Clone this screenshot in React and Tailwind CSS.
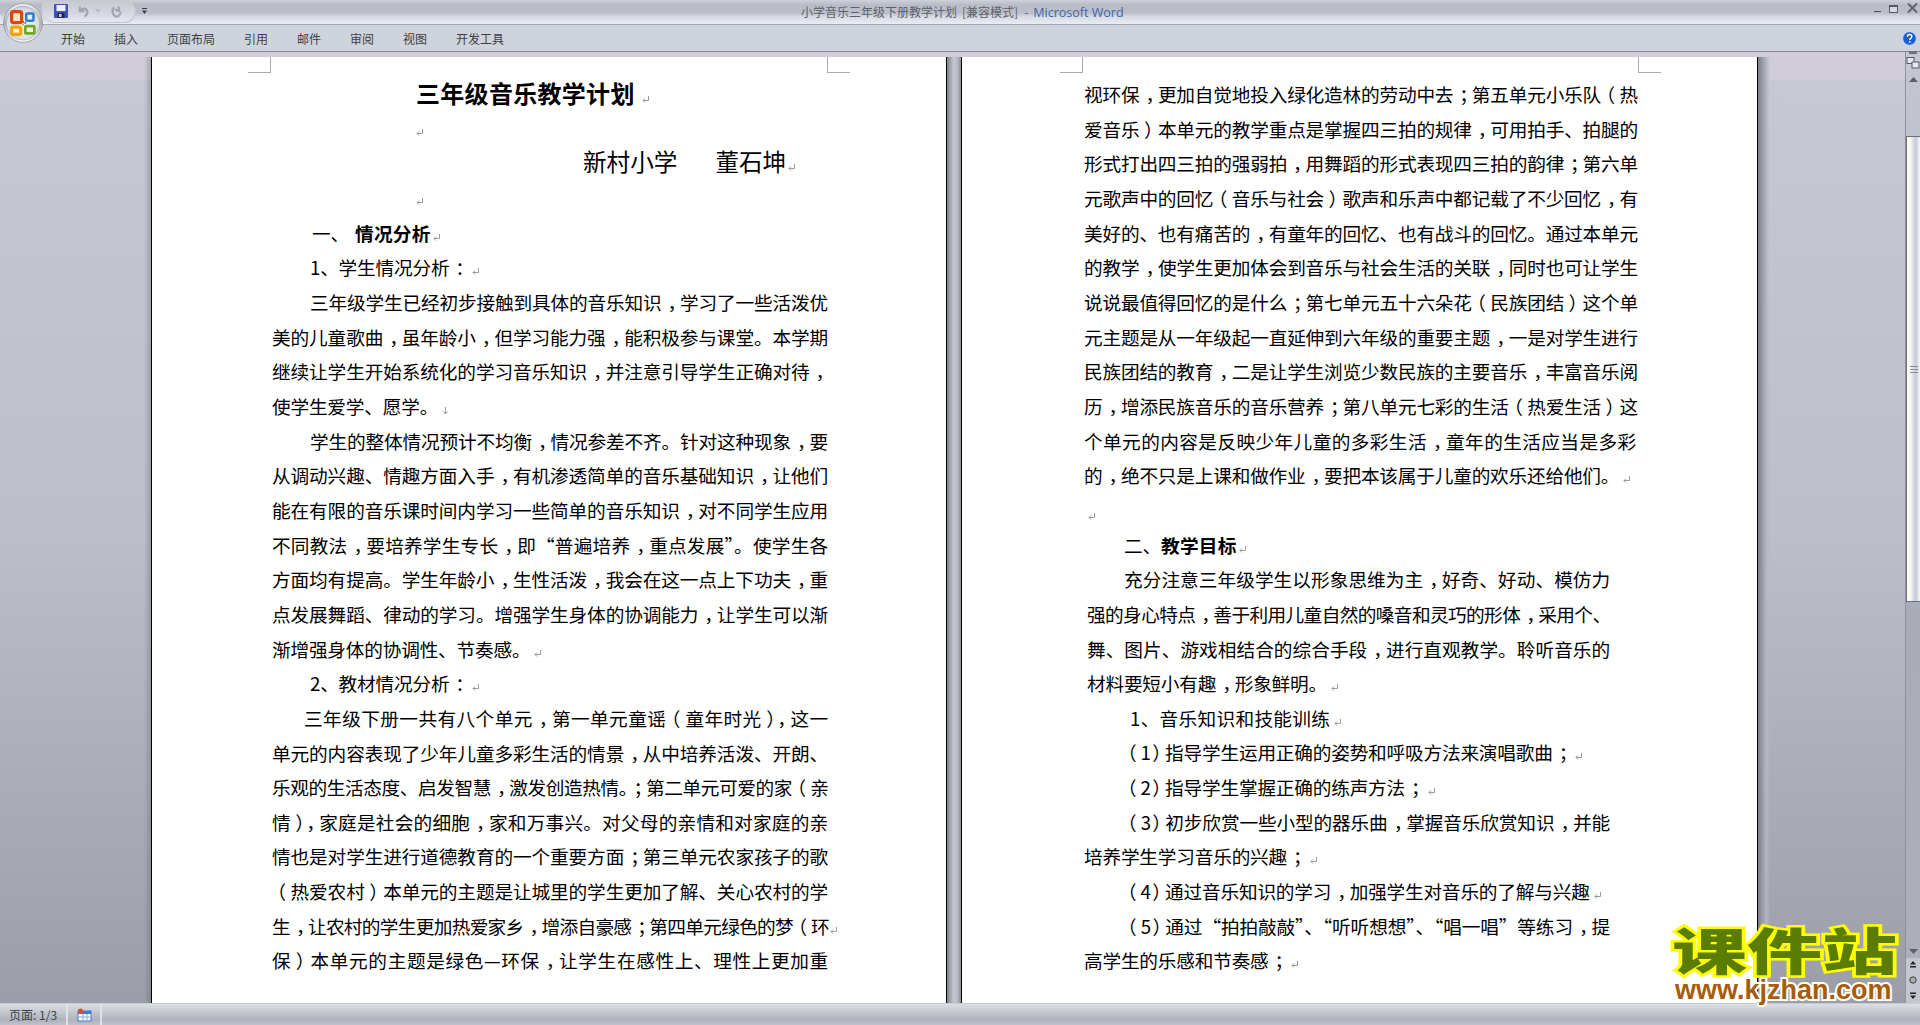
import React from "react";

const Mark = ({ cls = "ml-[3px]" }) => (
  <svg viewBox="0 0 9 9" className={`inline-block w-[9px] h-[9px] align-[-1px] ${cls}`}>
    <path d="M7.5 1v4.5H2M4 3.5 2 5.5 4 7.5" fill="none" stroke="#9a9a9a" strokeWidth="1" />
  </svg>
);
const DownMark = () => (
  <svg viewBox="0 0 9 9" className="inline-block w-[9px] h-[9px] align-[-1px] ml-[3px]">
    <path d="M4.5 1v7M2.5 5.5 4.5 8l2-2.5" fill="none" stroke="#9a9a9a" strokeWidth="1" />
  </svg>
);

const Txt = ({ t }) =>
  t.split(/(（\d）|[，；：（）])/).map((p, i) => {
    if (/^（\d）$/.test(p))
      return (
        <React.Fragment key={i}>
          （<span className="ml-[0.22em] -mr-[0.22em]">{p[1]}</span>
          <span className="ml-[0.3em] -mr-[0.3em]">）</span>
        </React.Fragment>
      );
    if (p === "（") return <span key={i} className="-ml-[0.24em] mr-[0.24em]">{p}</span>;
    if (p === "）") return <span key={i} className="ml-[0.24em] -mr-[0.24em]">{p}</span>;
    if (/^[，；：]$/.test(p)) return <span key={i} className="ml-[0.32em] -mr-[0.32em]">{p}</span>;
    return <React.Fragment key={i}>{p}</React.Fragment>;
  });

const J = "[text-align:justify] [text-align-last:justify]";

const Line = ({ t, cls, j, mark, down, hang }) => (
  <div className={`h-[34.67px] leading-[34.67px] whitespace-nowrap ${j ? J : ""} ${cls}`}>
    <Txt t={t} />
    {mark && <Mark />}
    {down && <DownMark />}
    {hang && <Mark cls="-mr-[10px]" />}
  </div>
);

const left = [
  { t: "1、学生情况分析：", cls: "ml-[38px]", mark: 1 },
  { t: "三年级学生已经初步接触到具体的音乐知识，学习了一些活泼优", cls: "ml-[38px] w-[518px]", j: 1 },
  { t: "美的儿童歌曲，虽年龄小，但学习能力强，能积极参与课堂。本学期", cls: "w-[556px]", j: 1 },
  { t: "继续让学生开始系统化的学习音乐知识，并注意引导学生正确对待，", cls: "w-[556px]", j: 1 },
  { t: "使学生爱学、愿学。", cls: "", down: 1 },
  { t: "学生的整体情况预计不均衡，情况参差不齐。针对这种现象，要", cls: "ml-[38px] w-[518px]", j: 1 },
  { t: "从调动兴趣、情趣方面入手，有机渗透简单的音乐基础知识，让他们", cls: "w-[556px]", j: 1 },
  { t: "能在有限的音乐课时间内学习一些简单的音乐知识，对不同学生应用", cls: "w-[556px]", j: 1 },
  { t: "不同教法，要培养学生专长，即“普遍培养，重点发展”。使学生各", cls: "w-[556px]", j: 1 },
  { t: "方面均有提高。学生年龄小，生性活泼，我会在这一点上下功夫，重", cls: "w-[556px]", j: 1 },
  { t: "点发展舞蹈、律动的学习。增强学生身体的协调能力，让学生可以渐", cls: "w-[556px]", j: 1 },
  { t: "渐增强身体的协调性、节奏感。", cls: "", mark: 1 },
  { t: "2、教材情况分析：", cls: "ml-[38px]", mark: 1 },
  { t: "三年级下册一共有八个单元，第一单元童谣（童年时光），这一", cls: "ml-[32px] w-[524px]", j: 1 },
  { t: "单元的内容表现了少年儿童多彩生活的情景，从中培养活泼、开朗、", cls: "w-[556px]", j: 1 },
  { t: "乐观的生活态度、启发智慧，激发创造热情。；第二单元可爱的家（亲", cls: "w-[556px] tracking-[-0.8px]", j: 1 },
  { t: "情），家庭是社会的细胞，家和万事兴。对父母的亲情和对家庭的亲", cls: "w-[556px]", j: 1 },
  { t: "情也是对学生进行道德教育的一个重要方面；第三单元农家孩子的歌", cls: "w-[556px]", j: 1 },
  { t: "（热爱农村）本单元的主题是让城里的学生更加了解、关心农村的学", cls: "w-[556px]", j: 1 },
  { t: "生，让农村的学生更加热爱家乡，增添自豪感；第四单元绿色的梦（环", cls: "w-[556px] tracking-[-0.8px]", j: 1, hang: 1 },
  { t: "保）本单元的主题是绿色—环保，让学生在感性上、理性上更加重", cls: "w-[556px]", j: 1 },
];

const right = [
  { t: "视环保，更加自觉地投入绿化造林的劳动中去；第五单元小乐队（热", cls: "w-[554px]", j: 1 },
  { t: "爱音乐）本单元的教学重点是掌握四三拍的规律，可用拍手、拍腿的", cls: "w-[554px]", j: 1 },
  { t: "形式打出四三拍的强弱拍，用舞蹈的形式表现四三拍的韵律；第六单", cls: "w-[554px]", j: 1 },
  { t: "元歌声中的回忆（音乐与社会）歌声和乐声中都记载了不少回忆，有", cls: "w-[554px]", j: 1 },
  { t: "美好的、也有痛苦的，有童年的回忆、也有战斗的回忆。通过本单元", cls: "w-[554px]", j: 1 },
  { t: "的教学，使学生更加体会到音乐与社会生活的关联，同时也可让学生", cls: "w-[554px]", j: 1 },
  { t: "说说最值得回忆的是什么；第七单元五十六朵花（民族团结）这个单", cls: "w-[554px]", j: 1 },
  { t: "元主题是从一年级起一直延伸到六年级的重要主题，一是对学生进行", cls: "w-[554px]", j: 1 },
  { t: "民族团结的教育，二是让学生浏览少数民族的主要音乐，丰富音乐阅", cls: "w-[554px]", j: 1 },
  { t: "历，增添民族音乐的音乐营养；第八单元七彩的生活（热爱生活）这", cls: "w-[554px]", j: 1 },
  { t: "个单元的内容是反映少年儿童的多彩生活，童年的生活应当是多彩", cls: "w-[552px]", j: 1 },
  { t: "的，绝不只是上课和做作业，要把本该属于儿童的欢乐还给他们。", cls: "", mark: 1 },
  { t: "", cls: "pt-[2px]", mark: 1 },
];

const right2 = [
  { t: "充分注意三年级学生以形象思维为主，好奇、好动、模仿力", cls: "ml-[40px] w-[486px]", j: 1 },
  { t: "强的身心特点，善于利用儿童自然的嗓音和灵巧的形体，采用个、", cls: "ml-[3px] w-[523px] tracking-[-1px]", j: 1 },
  { t: "舞、图片、游戏相结合的综合手段，进行直观教学。聆听音乐的", cls: "ml-[3px] w-[523px]", j: 1 },
  { t: "材料要短小有趣，形象鲜明。", cls: "ml-[3px]", mark: 1 },
  { t: "1、音乐知识和技能训练", cls: "ml-[46px] tracking-[0.3px]", mark: 1 },
  { t: "（1）指导学生运用正确的姿势和呼吸方法来演唱歌曲；", cls: "ml-[34px]", mark: 1 },
  { t: "（2）指导学生掌握正确的练声方法；", cls: "ml-[34px]", mark: 1 },
  { t: "（3）初步欣赏一些小型的器乐曲，掌握音乐欣赏知识，并能", cls: "ml-[34px] w-[492px]", j: 1 },
  { t: "培养学生学习音乐的兴趣；", cls: "", mark: 1 },
  { t: "（4）通过音乐知识的学习，加强学生对音乐的了解与兴趣", cls: "ml-[34px]", mark: 1 },
  { t: "（5）通过“拍拍敲敲”、“听听想想”、“唱一唱”等练习，提", cls: "ml-[34px] w-[492px]", j: 1 },
  { t: "高学生的乐感和节奏感；", cls: "", mark: 1 },
];

const OfficeButton = () => (
  <svg viewBox="0 0 44 44" className="absolute left-[3px] top-[3px] w-[40px] h-[40px]">
    <defs>
      <linearGradient id="orb" x1="0" y1="0" x2="0" y2="1">
        <stop offset="0" stopColor="#f8f8fa" />
        <stop offset="0.5" stopColor="#aeb0b7" />
        <stop offset="1" stopColor="#f6f6f8" />
      </linearGradient>
      <radialGradient id="orbIn" cx="0.5" cy="0.55" r="0.6">
        <stop offset="0" stopColor="#fbfbfc" />
        <stop offset="0.75" stopColor="#dcdde2" />
        <stop offset="1" stopColor="#b4b6bd" />
      </radialGradient>
    </defs>
    <circle cx="22" cy="22" r="21.4" fill="url(#orb)" stroke="#8c8e94" strokeWidth="0.8" />
    <circle cx="22" cy="22" r="18.6" fill="url(#orbIn)" stroke="#9a9ca3" strokeWidth="0.5" />
    <rect x="9.5" y="9.5" width="11" height="12" rx="2" fill="#fbe3c8" stroke="#d9480f" strokeWidth="3.6" />
    <rect x="25.5" y="11.5" width="8" height="8" rx="1" fill="#e4f0fb" stroke="#2f7fc8" strokeWidth="2.8" />
    <rect x="9.5" y="26.5" width="10" height="8" rx="1.5" fill="#fdf0c8" stroke="#f5a30a" strokeWidth="3.4" />
    <rect x="24.5" y="25.5" width="10" height="8" rx="1" fill="#e6f2d2" stroke="#6fa82a" strokeWidth="3" />
    <circle cx="22" cy="24" r="1.2" fill="#e8a020" />
    <circle cx="24.5" cy="22" r="1.2" fill="#3a80c8" />
    <circle cx="22" cy="21" r="1.2" fill="#d9480f" />
  </svg>
);

const tabs = ["开始", "插入", "页面布局", "引用", "邮件", "审阅", "视图", "开发工具"];

export default function App() {
  return (
    <div className="relative w-[1920px] h-[1025px] overflow-hidden flex flex-col bg-[#c5c8d2] font-['Noto_Sans_CJK_SC','Liberation_Sans',sans-serif] text-black">
      {/* title bar */}
      <div className="h-[24px] shrink-0 flex items-start bg-[linear-gradient(#cfd1d8_0,#b9bcc6_20%,#bcbfc9_55%,#d6d9e1_68%,#e9ecf4_100%)]">
        <div className="w-[801px] shrink-0 h-full pl-[42px] flex items-start">
          <div className="w-[94px] h-[23px] flex items-center pl-[12px] rounded-br-[12px] rounded-tr-[12px] rounded-bl-[14px] border border-[#c2c5ce] border-l-0 border-t-0 bg-[linear-gradient(#c6c8d0,#d4d7df_60%,#e6e9f1)]">
            <svg viewBox="0 0 14 14" className="w-[14px] h-[14px] shrink-0">
              <rect x="0" y="0" width="14" height="14" rx="1" fill="#3f53b4" />
              <rect x="2.5" y="1" width="9" height="6" fill="#eef0f8" />
              <rect x="3.5" y="9" width="7" height="5" fill="#22284e" />
              <rect x="5" y="10" width="2.5" height="3" fill="#ccd" />
            </svg>
            <svg viewBox="0 0 14 14" className="w-[13px] h-[13px] ml-[9px] shrink-0">
              <path d="M3 1.5v5h5M3.5 6C5 3 10 3 11 6.5c.6 2.5-1 5-3 6" fill="none" stroke="#a2a6b0" strokeWidth="2.4" />
            </svg>
            <svg viewBox="0 0 6 4" className="w-[6px] h-[4px] shrink-0 ml-[5px]"><path d="M0 0h6L3 4z" fill="#b6b9c2" /></svg>
            <svg viewBox="0 0 14 14" className="w-[13px] h-[13px] ml-[9px] shrink-0">
              <path d="M9 1.5l1 5L5.5 5M4.5 2.5C2 4.500 2 10 5.500 12c3.500 1.500 6-1.500 6-5" fill="none" stroke="#a2a6b0" strokeWidth="2.4" />
            </svg>
          </div>
          <svg viewBox="0 0 5 6" className="w-[5px] h-[6px] ml-[6px] mt-[8px] shrink-0">
            <path d="M0 0h5v1H0zM0 2.500h5L2.500 6z" fill="#3a3d44" />
          </svg>
        </div>
        <div className="h-[24px] leading-[24px] text-[12px] whitespace-nowrap text-[#5d6068]">
          小学音乐三年级下册教学计划<span className="ml-[5px]">[兼容模式]</span><span className="ml-[6px]">-</span><span className="ml-[5px] text-[#3b68a8] text-[12.5px] font-['Open_Sans',sans-serif]">Microsoft Word</span>
        </div>
        <div className="flex-1" />
        <div className="flex items-start gap-[8px] pr-[2px] pt-[3px]">
          <div className="w-[7px] h-[2px] bg-[#4a4d55] mt-[8px] border-b border-white/60" />
          <svg viewBox="0 0 10 9" className="w-[10px] h-[9px] mt-px"><rect x="0.5" y="1.5" width="8" height="7" fill="#d5d8e0" stroke="#555a64" /><rect x="0" y="1" width="9" height="2" fill="#555a64" /></svg>
          <svg viewBox="0 0 11 10" className="w-[11px] h-[10px]"><path d="M1 0.5 10 9.500M10 0.5 1 9.500" stroke="#60646c" strokeWidth="2" /></svg>
        </div>
      </div>
      {/* tab row */}
      <div className="h-[28px] shrink-0 flex items-center bg-[#cfd3dc] border-t border-[#a4a7b0] border-b border-b-[#85888f] pl-[61px] pr-[3px]">
        <div className="flex gap-[29px] text-[12px] text-[#3c4048] pt-[1px]">
          {tabs.map((t) => <span key={t}>{t}</span>)}
        </div>
        <div className="flex-1" />
        <svg viewBox="0 0 16 16" className="w-[15px] h-[15px]">
          <circle cx="8" cy="8" r="7.3" fill="#1f5fcf" stroke="#c9ddf5" strokeWidth="1" />
          <path d="M5.800 6c0-3 4.600-3 4.600 0 0 2-2.200 2-2.200 3.600" fill="none" stroke="#fff" strokeWidth="1.5" />
          <rect x="7.400" y="10.800" width="1.600" height="1.600" fill="#fff" />
        </svg>
      </div>
      {/* main */}
      <div className="flex-1 min-h-0 flex flex-col">
        <div className="h-[5px] shrink-0 bg-[#d0cdd8]" />
        <div className="flex-1 min-h-0 flex bg-[linear-gradient(#d0cdd8_0,#d0cdd8_23px,#c6c9d3_23px,#bcbfc9_50%,#9b9ea8_100%)]">
          <div className="w-[151px] shrink-0 flex justify-end">
            <div className="w-[7px] bg-[linear-gradient(to_right,transparent,rgba(90,92,100,0.35))]" />
          </div>
          <div className="w-[796px] shrink-0 bg-white border-x border-black pl-[120px] text-[18.67px] tracking-[-0.2px] flex flex-col relative">
            <div className="h-[16px] w-[23px] ml-[-24px] border-r border-b border-[#a8a8b0] shrink-0" />
            <div className="absolute left-[675px] top-0 h-[16px] w-[23px] border-l border-b border-[#a8a8b0]" />
            <div className="pt-[3px]">
              <div className="h-[34.67px] leading-[34.67px] ml-[144px] whitespace-nowrap text-[24px] font-bold tracking-[0.3px]">三年级音乐教学计划<Mark cls="ml-[6px]" /></div>
              <div className="h-[36.5px] pt-[8px] ml-[143px] flex items-center"><Mark cls="" /></div>
              <div className="h-[28px] leading-[28px] ml-[311px] whitespace-nowrap text-[23.6px] tracking-normal">新村小学<span className="inline-block w-[38px]" />董石坤<Mark cls="ml-[1px]" /></div>
              <div className="h-[40.5px] pt-[13px] ml-[143px] flex items-center"><Mark cls="" /></div>
              <div className="h-[34.67px] leading-[34.67px] ml-[40px] whitespace-nowrap">一、<span className="ml-[6px] font-bold tracking-[0.3px]">情况分析</span><Mark cls="ml-[1px]" /></div>
              {left.map((l, i) => <Line key={i} {...l} />)}
            </div>
          </div>
          <div className="w-[14px] shrink-0 bg-[linear-gradient(to_right,#7e8188,#c2c4ce_45%,#bcbec8_70%,#8d9097)]" />
          <div className="w-[797px] shrink-0 bg-white border-x border-black pl-[122px] text-[18.67px] tracking-[-0.2px] flex flex-col relative">
            <div className="absolute left-[98px] top-0 h-[16px] w-[23px] border-r border-b border-[#a8a8b0]" />
            <div className="absolute left-[676px] top-0 h-[16px] w-[23px] border-l border-b border-[#a8a8b0]" />
            <div className="pt-[20px]">
              {right.map((l, i) => <Line key={i} {...l} />)}
              <div className="h-[34.67px] leading-[34.67px] ml-[40px] whitespace-nowrap">二、<span className="font-bold tracking-[0.3px]">教学目标</span><Mark cls="ml-[1px]" /></div>
              {right2.map((l, i) => <Line key={i} {...l} />)}
            </div>
          </div>
          <div className="flex-1 flex">
            <div className="w-[12px] bg-[linear-gradient(to_right,#7c7f86,#b4b7c0_70%,transparent)]" />
            <div className="flex-1" />
          </div>
          {/* scrollbar */}
          <div className="w-[15px] shrink-0 -mt-[5px] flex flex-col bg-[linear-gradient(#c4c7d0,#a9acb6_60%,#adb0ba)] border-l border-[#8f929b]">
            <div className="h-[3px] mt-[-1px] mx-[3px] bg-[#70737a] shrink-0" />
            <svg viewBox="0 0 14 14" className="w-[14px] h-[14px] mt-[2px] shrink-0 bg-[#c6c9d2]">
              <rect x="1" y="1.500" width="7" height="6" fill="#e8e6f0" stroke="#555a64" />
              <rect x="6" y="6" width="7" height="6" fill="#e8e6f0" stroke="#555a64" />
            </svg>
            <div className="h-[18px] shrink-0 flex items-center justify-center">
              <svg viewBox="0 0 9 5" className="w-[9px] h-[5px]"><path d="M4.500 0 9 5H0z" fill="#5c6068" /></svg>
            </div>
            <div className="h-[48px] shrink-0" />
            <div className="h-[466px] shrink-0 border-y border-l border-[#6c6f76] flex items-center justify-center bg-[linear-gradient(to_right,#fffef6,#f4f4f0_30%,#d3d5e0_55%,#c8cad8_70%,#fafaf6)]">
              <div className="w-[8px] h-[7px] border-y border-[#8a8c94] flex items-center"><div className="w-full h-px bg-[#8a8c94]" /></div>
            </div>
            <div className="flex-1" />
            <div className="h-[14px] shrink-0 flex items-center justify-center">
              <svg viewBox="0 0 9 5" className="w-[9px] h-[5px]"><path d="M0 0h9L4.500 5z" fill="#5c6068" /></svg>
            </div>
            <div className="h-[45px] shrink-0 flex flex-col items-center justify-around bg-[#c3c6cf] pb-[1px]">
              <svg viewBox="0 0 8 8" className="w-[8px] h-[8px]"><path d="M4 0 7 3.500H1zM1 5h6v1.500H1z" fill="#222" /></svg>
              <svg viewBox="0 0 8 8" className="w-[8px] h-[8px]"><circle cx="4" cy="4" r="3.200" fill="#aaa" stroke="#444" /></svg>
              <svg viewBox="0 0 8 8" className="w-[8px] h-[8px]"><path d="M1 1.500h6V3H1zM1 4.500h6L4 8z" fill="#222" /></svg>
            </div>
          </div>
        </div>
      </div>
      {/* status bar */}
      <div className="h-[22px] shrink-0 flex items-center text-[12px] text-[#3c3f46] bg-[linear-gradient(#dcdee4,#c8cad2_35%,#afb2bc_75%,#bfc2cb)] border-t border-[#c9cbd2]">
        <div className="w-[68px] h-full pl-[9px] flex items-center border-r-2 border-[#e0e1e6]">页面: 1/3</div>
        <div className="w-[34px] h-full flex items-center justify-center border-r-2 border-[#e0e1e6]">
          <svg viewBox="0 0 15 14" className="w-[15px] h-[14px]">
            <rect x="1" y="3" width="13" height="10" fill="#f2f6fc" stroke="#4a7fc0" />
            <rect x="1" y="3" width="13" height="3" fill="#3f7ac4" />
            <path d="M1 9h13M6 6v7M10 6v7" stroke="#8fb0d8" strokeWidth="1" />
            <circle cx="3.500" cy="3" r="2.600" fill="#e0502a" />
          </svg>
        </div>
      </div>
      <OfficeButton />
      {/* watermark */}
      <div className="absolute left-[1672px] top-[916px] w-[240px] h-[100px] pointer-events-none">
        <div className="h-[64px] leading-[64px] origin-left scale-x-150 whitespace-nowrap text-[50px] font-black text-[#5a7d00] [-webkit-text-stroke:5px_#ffff00] [paint-order:stroke_fill]">课件站</div>
        <div className="h-[26px] leading-[26px] pl-[3px] mt-[-3px] whitespace-nowrap text-[27px] font-bold font-['Liberation_Sans',sans-serif] text-[#a85c0a] [-webkit-text-stroke:4px_#ffffff] [paint-order:stroke_fill]">www.kjzhan.com</div>
      </div>
    </div>
  );
}
